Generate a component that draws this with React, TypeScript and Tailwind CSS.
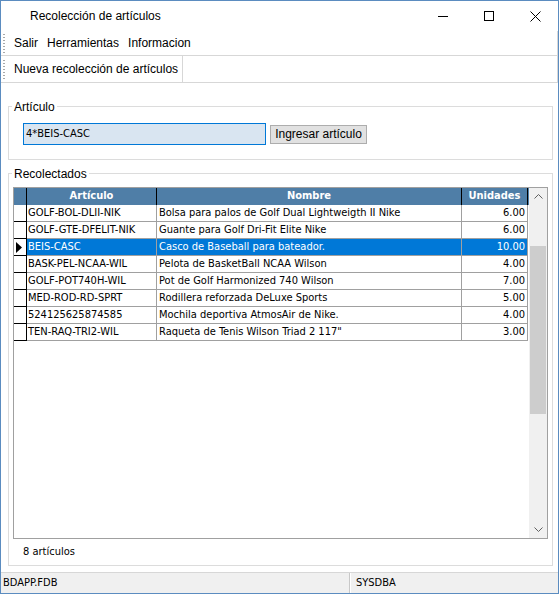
import React from "react";

const rows = [
  ["GOLF-BOL-DLII-NIK", "Bolsa para palos de Golf Dual Lightweigth II Nike", "6.00"],
  ["GOLF-GTE-DFELIT-NIK", "Guante para Golf Dri-Fit Elite Nike", "6.00"],
  ["BEIS-CASC", "Casco de Baseball para bateador.", "10.00"],
  ["BASK-PEL-NCAA-WIL", "Pelota de BasketBall NCAA Wilson", "4.00"],
  ["GOLF-POT740H-WIL", "Pot de Golf Harmonized 740 Wilson", "7.00"],
  ["MED-ROD-RD-SPRT", "Rodillera reforzada DeLuxe Sports", "5.00"],
  ["524125625874585", "Mochila deportiva AtmosAir de Nike.", "4.00"],
  ["TEN-RAQ-TRI2-WIL", "Raqueta de Tenis Wilson Triad 2 117\"", "3.00"],
];

function Gripper() {
  return (
    <div className="flex flex-col gap-[2px] ml-[2px] w-[2px]">
      {Array.from({ length: 7 }).map((_, i) => (
        <div key={i} className="w-[2px] h-[1px] bg-[#a8a8a8]" />
      ))}
    </div>
  );
}

const grid = "font-['DejaVu_Sans_Condensed','DejaVu_Sans',sans-serif] text-[11px] [font-stretch:condensed]";

export default function App() {
  return (
    <div className="w-[559px] h-[594px] border border-[#5b8cc0] bg-white flex flex-col font-['Liberation_Sans',sans-serif] text-[12px] text-black overflow-hidden">
      {/* Title bar */}
      <div className="h-[30px] flex items-center shrink-0">
        <div className="pl-[29px] flex-1 leading-none">Recolección de artículos</div>
        <div className="w-[46px] h-[30px] flex items-center justify-center">
          <div className="w-[10px] h-[1px] bg-black" />
        </div>
        <div className="w-[46px] h-[30px] flex items-center justify-center">
          <div className="w-[10px] h-[10px] border border-black" />
        </div>
        <div className="w-[46px] h-[30px] flex items-center justify-center">
          <svg width="11" height="11" viewBox="0 0 11 11">
            <path d="M0.5 0.5 L10.5 10.5 M10.5 0.5 L0.5 10.5" stroke="#000" strokeWidth="1" />
          </svg>
        </div>
      </div>
      {/* Menu bar */}
      <div className="h-[25px] shrink-0 flex items-center border-b border-r border-[#d7d7d7]">
        <Gripper />
        <div className="flex items-center gap-[9px] pl-[9px] leading-none">
          <span>Salir</span>
          <span>Herramientas</span>
          <span>Informacion</span>
        </div>
      </div>
      {/* Toolbar */}
      <div className="h-[27px] shrink-0 flex items-center border-b border-r border-[#d7d7d7]">
        <Gripper />
        <div className="h-full flex items-center pl-[9px] pr-[4px] border-r border-[#d7d7d7] leading-none">
          Nueva recolección de artículos
        </div>
      </div>
      {/* Body */}
      <div className="flex-1 flex flex-col pl-[7px] pr-[5px] pb-[6px] min-h-0">
        {/* Artículo group */}
        <div className="relative mt-[23px] border border-[#dcdcdc] pt-[16px] pb-[14px] pl-[14px] flex items-center gap-[4px]">
          <span className="absolute -top-[7px] left-[3px] px-[2px] bg-white leading-[14px]">Artículo</span>
          <div className={`w-[243px] h-[22px] border border-[#0078d7] bg-[#d9e5f1] flex items-center pl-[2px] ${grid}`}>
            4*BEIS-CASC
          </div>
          <button className="w-[97px] h-[19px] border border-[#adadad] bg-[#e1e1e1] flex items-center justify-center leading-none">
            Ingresar artículo
          </button>
        </div>
        {/* Recolectados group */}
        <div className="relative mt-[13px] flex-1 border border-[#dcdcdc] pt-[13px] px-[4px] flex flex-col min-h-0">
          <span className="absolute -top-[7px] left-[3px] px-[2px] bg-white leading-[14px]">Recolectados</span>
          <div className={`flex-1 border border-[#a0a0a0] flex min-h-0 ${grid}`}>
            <div className="flex-1 flex flex-col">
              <div className="h-[17px] flex bg-[#4f7ea7] text-white font-bold">
                <div className="w-[13px] border-r border-black" />
                <div className="w-[130px] border-r border-black flex items-center justify-center">Artículo</div>
                <div className="w-[305px] border-r border-black flex items-center justify-center">Nombre</div>
                <div className="w-[66px] border-r border-black flex items-center justify-center">Unidades</div>
              </div>
              {rows.map((r, i) => {
                const sel = i === 2;
                return (
                  <div key={i} className="h-[17px] flex">
                    <div className="w-[13px] border-r border-b border-black flex items-center pl-[2px]">
                      {sel && (
                        <svg width="6" height="11" viewBox="0 0 6 11">
                          <path d="M0 0 L6 5.5 L0 11 Z" fill="#000" />
                        </svg>
                      )}
                    </div>
                    <div className={`w-[130px] border-r border-b border-[#a0a0a0] flex items-center pl-[1px] whitespace-nowrap overflow-hidden ${sel ? "bg-[#0078d7] text-white" : ""}`}>
                      {r[0]}
                    </div>
                    <div className={`w-[305px] border-r border-b border-[#a0a0a0] flex items-center pl-[2px] whitespace-nowrap overflow-hidden ${sel ? "bg-[#0078d7] text-white" : ""}`}>
                      {r[1]}
                    </div>
                    <div className={`w-[66px] border-r border-b border-[#a0a0a0] flex items-center justify-end pr-[2px] ${sel ? "bg-[#0078d7] text-white" : ""}`}>
                      {r[2]}
                    </div>
                  </div>
                );
              })}
            </div>
            {/* Scrollbar */}
            <div className="w-[18px] bg-[#f0f0f0] flex flex-col">
              <div className="h-[17px] flex items-center justify-center">
                <svg width="9" height="5" viewBox="0 0 9 5">
                  <path d="M0.5 4.5 L4.5 0.5 L8.5 4.5" stroke="#606060" fill="none" />
                </svg>
              </div>
              <div className="h-[41px]" />
              <div className="h-[168px] mx-[1px] bg-[#cdcdcd]" />
              <div className="flex-1" />
              <div className="h-[17px] flex items-center justify-center">
                <svg width="9" height="5" viewBox="0 0 9 5">
                  <path d="M0.5 0.5 L4.5 4.5 L8.5 0.5" stroke="#606060" fill="none" />
                </svg>
              </div>
            </div>
          </div>
          <div className={`h-[26px] flex items-center pl-[10px] ${grid}`}>8 artículos</div>
        </div>
      </div>
      {/* Status bar */}
      <div className={`h-[21px] shrink-0 border-t border-[#d7d7d7] bg-[#f0f0f0] flex ${grid}`}>
        <div className="w-[349px] flex items-center pl-[2px] border-r border-[#c8c8c8]">BDAPP.FDB</div>
        <div className="flex-1 flex items-center pl-[5px] border-l border-white">SYSDBA</div>
      </div>
    </div>
  );
}
